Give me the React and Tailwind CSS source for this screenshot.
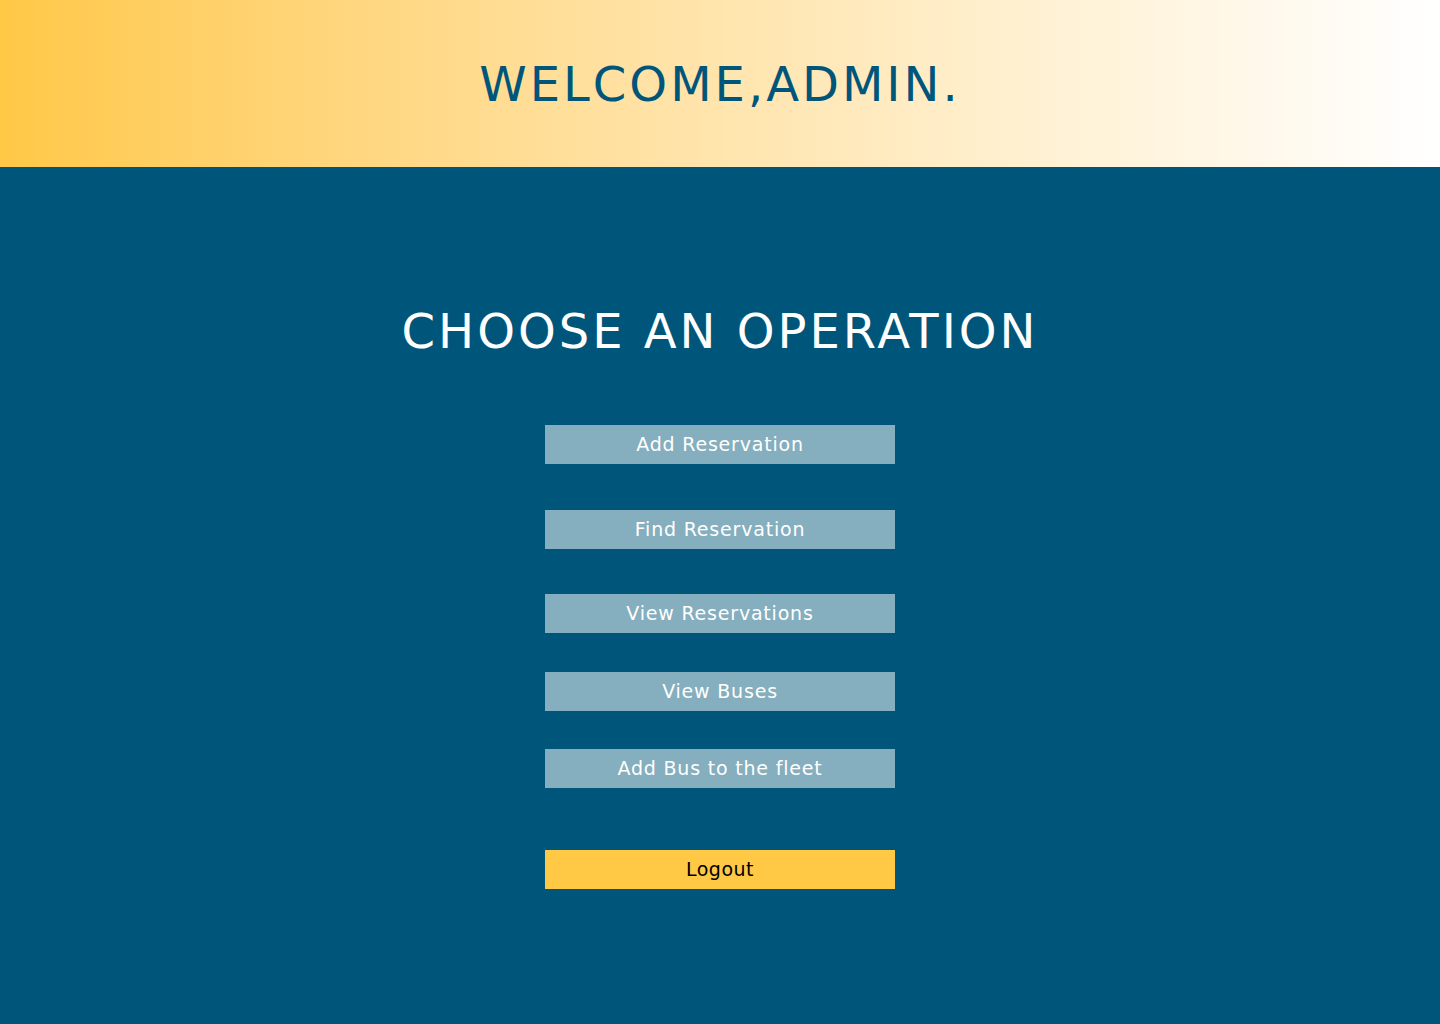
import React from "react";

const ops = [
  { label: "Add Reservation", mt: "mt-0" },
  { label: "Find Reservation", mt: "mt-[46px]" },
  { label: "View Reservations", mt: "mt-[45px]" },
  { label: "View Buses", mt: "mt-[39px]" },
  { label: "Add Bus to the fleet", mt: "mt-[38px]" },
];

const App = () => {
  return (
    <div className="min-h-screen bg-[#00567a] font-['DejaVu_Sans',sans-serif]">
      {/* HEADER */}
      <div className="h-[167px] bg-gradient-to-r from-[#ffc845] to-white flex items-center justify-center">
        <h1 className="text-[48px] text-[#00567a] tracking-[3px] leading-none">
          WELCOME,ADMIN.
        </h1>
      </div>

      {/* OPERATIONS */}
      <div className="flex flex-col items-center pt-[140px] pb-[135px]">
        <h2 className="text-[48px] text-white leading-none tracking-[3px]">
          CHOOSE AN OPERATION
        </h2>

        <div className="mt-[70px] flex flex-col items-center">
          {ops.map((op) => (
            <button
              key={op.label}
              className={`${op.mt} w-[350px] h-[39px] bg-[#85aebe] text-white text-[19px] tracking-[0.8px]`}
            >
              {op.label}
            </button>
          ))}

          <button className="mt-[62px] w-[350px] h-[39px] bg-[#ffc845] text-black text-[19px] tracking-[0.5px]">
            Logout
          </button>
        </div>
      </div>
    </div>
  );
};

export default App;
